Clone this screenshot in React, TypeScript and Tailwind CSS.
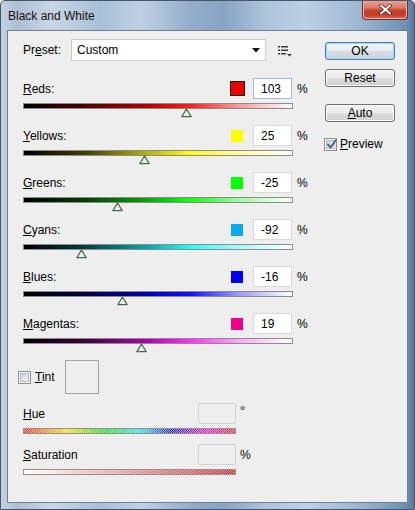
type Channel = {
  key: string
  rest: string
  value: number
  swatch: string
  bar: string
  focused?: boolean
}

const channels: Channel[] = [
  {
    key: 'R',
    rest: 'eds:',
    value: 103,
    swatch: 'h-[15px] w-[15px] border border-[#1e1e1e] bg-[#ee0000]',
    bar: 'bg-[linear-gradient(to_right,#000_0%,#4a0000_22%,#c00000_48%,#ff1a1a_62%,#ff9a9a_80%,#fff_100%)]',
    focused: true,
  },
  {
    key: 'Y',
    rest: 'ellows:',
    value: 25,
    swatch: 'h-[12px] w-[12px] bg-[#ffff00]',
    bar: 'bg-[linear-gradient(to_right,#000_0%,#3c3c00_22%,#b4b400_46%,#ffff10_62%,#ffff9a_80%,#fff_100%)]',
  },
  {
    key: 'G',
    rest: 'reens:',
    value: -25,
    swatch: 'h-[12px] w-[12px] bg-[#00ff00]',
    bar: 'bg-[linear-gradient(to_right,#000_0%,#003c00_22%,#00a800_46%,#10ff10_62%,#9aff9a_80%,#fff_100%)]',
  },
  {
    key: 'C',
    rest: 'yans:',
    value: -92,
    swatch: 'h-[12px] w-[12px] bg-[#0aa8ec]',
    bar: 'bg-[linear-gradient(to_right,#000_0%,#003c3c_22%,#00a8a8_46%,#20ffff_62%,#a0ffff_80%,#fff_100%)]',
  },
  {
    key: 'B',
    rest: 'lues:',
    value: -16,
    swatch: 'h-[12px] w-[12px] bg-[#0000ee]',
    bar: 'bg-[linear-gradient(to_right,#000_0%,#00003c_22%,#0000b0_46%,#1010ff_62%,#9a9aff_80%,#fff_100%)]',
  },
  {
    key: 'M',
    rest: 'agentas:',
    value: 19,
    swatch: 'h-[12px] w-[12px] bg-[#ee0088]',
    bar: 'bg-[linear-gradient(to_right,#000_0%,#3c003c_22%,#b000b0_46%,#ff30ff_62%,#ffa8ff_80%,#fff_100%)]',
  },
]

function Thumb({ value }: { value: number }) {
  // slider range runs from -200 to 300
  const pct = ((value + 200) / 500) * 100
  return (
    <svg
      width="11"
      height="10"
      viewBox="0 0 11 10"
      className="absolute top-[4px]"
      style={{ left: `calc(${pct}% - 5.5px)` }}
    >
      <path
        d="M5.5 1 L10.2 8.6 H0.8 Z"
        fill="#e6f0e6"
        stroke="#4c6650"
        strokeWidth="1.2"
        strokeLinejoin="round"
      />
    </svg>
  )
}

function CheckBox({ checked }: { checked?: boolean }) {
  return (
    <div className="relative flex h-[13px] w-[13px] items-center justify-center border border-[#8e8f8f] bg-[#f4f4f4]">
      <div className="h-[9px] w-[9px] border border-[#b6bcc4] bg-[linear-gradient(135deg,#cbd0d6,#eef0f2)]" />
      {checked && (
        <svg width="11" height="11" viewBox="0 0 11 11" className="absolute left-[1px] top-[0px]">
          <path
            d="M2 5.5 L4.5 8.5 L9.5 1.5"
            fill="none"
            stroke="#3d5590"
            strokeWidth="1.8"
            strokeLinecap="round"
            strokeLinejoin="round"
          />
        </svg>
      )}
    </div>
  )
}

function Button({ children, isDefault }: { children: React.ReactNode; isDefault?: boolean }) {
  return (
    <div
      className={
        isDefault
          ? 'flex h-[18px] w-[70px] items-center justify-center rounded-[3px] border border-[#3c7fb1] bg-[linear-gradient(to_bottom,#eef3f7_0%,#e6ebef_50%,#d7dde3_51%,#cbd2d9_100%)] text-[12px] leading-none shadow-[inset_0_0_0_1px_#a9d8f4]'
          : 'flex h-[18px] w-[70px] items-center justify-center rounded-[3px] border border-[#707070] bg-[linear-gradient(to_bottom,#f2f2f2_0%,#ebebeb_50%,#dddddd_51%,#cfcfcf_100%)] text-[12px] leading-none shadow-[inset_0_0_0_1px_#fbfbfb]'
      }
    >
      {children}
    </div>
  )
}

function ListIcon() {
  return (
    <svg width="14" height="12" viewBox="0 0 14 12">
      <rect x="0" y="1" width="2" height="1.5" fill="#3a3a3a" />
      <rect x="3" y="1" width="7" height="1.5" fill="#3a3a3a" />
      <rect x="0" y="4.5" width="2" height="1.5" fill="#3a3a3a" />
      <rect x="3" y="4.5" width="7" height="1.5" fill="#3a3a3a" />
      <rect x="0" y="8" width="2" height="1.5" fill="#3a3a3a" />
      <rect x="3" y="8" width="5" height="1.5" fill="#3a3a3a" />
      <path d="M9 9 H14 L11.5 11.5 Z" fill="#3a3a3a" />
    </svg>
  )
}

function ChannelRow({ channel }: { channel: Channel }) {
  return (
    <div className="mb-[16px] flex flex-col">
      <div className="flex h-[21px] items-center">
        <span className="flex-1">
          <u>{channel.key}</u>
          {channel.rest}
        </span>
        <div className="flex w-[16px] items-center justify-center">
          <div className={channel.swatch} />
        </div>
        <div
          className={
            channel.focused
              ? 'ml-[8px] flex h-[21px] w-[39px] items-center border border-[#9fbbd8] bg-white pl-[7px]'
              : 'ml-[8px] flex h-[21px] w-[39px] items-center border border-[#d9d9d9] bg-white pl-[7px]'
          }
        >
          {channel.value}
        </div>
        <span className="ml-[5px] w-[11px]">%</span>
      </div>
      <div className={`relative mt-[4px] h-[6px] w-[270px] border border-[#8c8c8c] ${channel.bar}`}>
        <Thumb value={channel.value} />
      </div>
    </div>
  )
}

// disabled tint sliders: colour ramp with a light one-pixel dither on top
function DitheredBar({ id, stops }: { id: string; stops: [number, string][] }) {
  return (
    <div className="mt-[4px] h-[6px] w-[213px] border border-[#a08c8c]">
      <svg width="211" height="4" className="block">
        <defs>
          <linearGradient id={`${id}-ramp`} x1="0" x2="1" y1="0" y2="0">
            {stops.map(([o, c]) => (
              <stop key={o} offset={o} stopColor={c} />
            ))}
          </linearGradient>
          <pattern id={`${id}-dither`} width="2" height="2" patternUnits="userSpaceOnUse">
            <rect x="0" y="0" width="1" height="1" fill="#ffffff" fillOpacity="0.55" />
            <rect x="1" y="1" width="1" height="1" fill="#ffffff" fillOpacity="0.55" />
          </pattern>
        </defs>
        <rect width="211" height="4" fill={`url(#${id}-ramp)`} />
        <rect width="211" height="4" fill={`url(#${id}-dither)`} />
      </svg>
    </div>
  )
}

const hueStops: [number, string][] = [
  [0, '#e83030'],
  [0.2, '#f0e020'],
  [0.38, '#20e020'],
  [0.55, '#20e8e8'],
  [0.7, '#2020e8'],
  [0.86, '#e020e0'],
  [1, '#e03040'],
]

const saturationStops: [number, string][] = [
  [0, '#ffffff'],
  [1, '#c02020'],
]

export default function App() {
  return (
    <div className="relative h-[510px] w-[415px] overflow-hidden rounded-t-[5px] border border-[#44566a] bg-[linear-gradient(to_right,#c4d3e2_0%,#aebfd2_4%,#c8d6e4_12%,#a9c0d8_24%,#bfd0e2_34%,#93adc9_46%,#87a4c3_54%,#aec4db_64%,#bccfe3_74%,#a0b9d3_86%,#6f8fb2_98%,#5a7799_100%)] font-['Liberation_Sans',Arial,sans-serif] text-[12px] text-black">
      {/* caption bar */}
      <div className="flex h-[29px] items-center pl-[7px] text-[12px] text-[#111]">Black and White</div>

      <div className="absolute right-[6px] top-[-1px] flex h-[20px] w-[46px] items-center justify-center rounded-b-[4px] border border-t-0 border-[#6a2e2a] bg-[linear-gradient(to_bottom,#e9a99b_0%,#d9786a_40%,#c4412f_55%,#c23a28_75%,#d86a50_100%)] shadow-[inset_0_0_0_1px_#f0b8ac]">
        <svg width="13" height="11" viewBox="0 0 13 11">
          <path
            d="M2 1.5 L11 9.5 M11 1.5 L2 9.5"
            stroke="#5a1e1a"
            strokeWidth="3.6"
            strokeLinecap="round"
          />
          <path d="M2 1.5 L11 9.5 M11 1.5 L2 9.5" stroke="#ffffff" strokeWidth="2" strokeLinecap="round" />
        </svg>
      </div>

      {/* dialog client area */}
      <div className="mx-[6px] flex h-[473px] border border-[#6f8194] bg-[#eeeeee] pl-[15px]">
        <div className="flex w-[285px] flex-col">
          <div className="mt-[8px] flex h-[22px] items-center">
            <span className="w-[48px]">
              Pr<u>e</u>set:
            </span>
            <div className="flex h-[22px] w-[195px] items-center justify-between border border-[#cdcdcd] bg-white pl-[5px] pr-[5px]">
              <span>Custom</span>
              <svg width="8" height="5" viewBox="0 0 8 5">
                <path d="M0 0 H8 L4 4.5 Z" fill="#111" />
              </svg>
            </div>
            <div className="ml-[12px] mt-[1px]">
              <ListIcon />
            </div>
          </div>

          <div className="mt-[17px] flex flex-col">
            {channels.map((c) => (
              <ChannelRow key={c.key} channel={c} />
            ))}
          </div>

          <div className="-ml-[5px] flex items-center">
            <CheckBox />
            <span className="ml-[4px]">
              <u>T</u>int
            </span>
            <div className="ml-[10px] h-[34px] w-[34px] border border-[#a3a3a3] bg-[#eeeeee]" />
          </div>

          <div className="mt-[9px] flex items-center">
            <div className="flex w-[213px] items-center justify-between">
              <span>
                <u>H</u>ue
              </span>
              <div className="h-[21px] w-[38px] rounded-[2px] border border-[#d2d2d2] bg-[#eeeeee]" />
            </div>
            <span className="ml-[4px] -mt-[6px] text-[13px] leading-none">°</span>
          </div>
          <DitheredBar id="hue" stops={hueStops} />

          <div className="mt-[10px] flex items-center">
            <div className="flex w-[213px] items-center justify-between">
              <span>
                <u>S</u>aturation
              </span>
              <div className="h-[21px] w-[38px] rounded-[2px] border border-[#d2d2d2] bg-[#eeeeee]" />
            </div>
            <span className="ml-[4px]">%</span>
          </div>
          <DitheredBar id="sat" stops={saturationStops} />
        </div>

        <div className="ml-[17px] flex w-[70px] flex-col">
          <div className="mt-[11px]">
            <Button isDefault>OK</Button>
          </div>
          <div className="mt-[9px]">
            <Button>Reset</Button>
          </div>
          <div className="mt-[17px]">
            <Button>
              <span>
                <u>A</u>uto
              </span>
            </Button>
          </div>
          <div className="-ml-[1px] mt-[13px] flex items-center">
            <CheckBox checked />
            <span className="ml-[3px]">
              <u>P</u>review
            </span>
          </div>
        </div>
      </div>
    </div>
  )
}
